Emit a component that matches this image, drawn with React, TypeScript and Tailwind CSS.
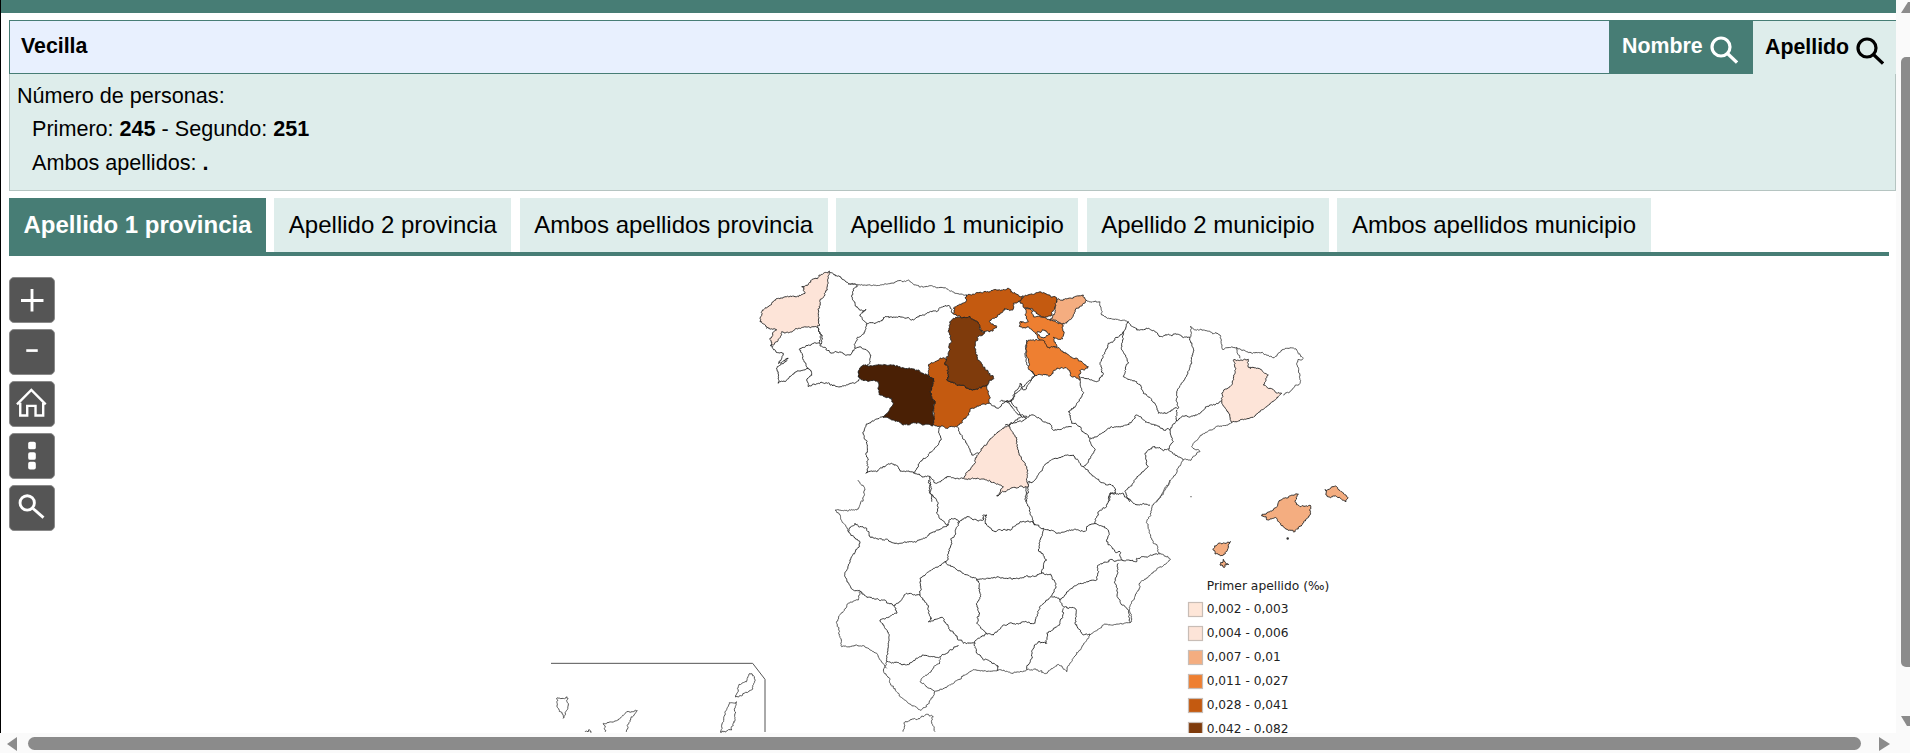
import React from 'react';

// zoom crops the outlines were traced from: [origin x, origin y], 3x
const frames: Record<string, [number, number]> = {
  a: [740, 260],
  b: [1000, 260],
  c: [820, 480],
  d: [520, 640],
  e: [1160, 480],
};

const light = '#fde4d8';
const peach = '#f4ad80';
const orange = '#ee7f31';
const rust = '#c45a10';
const brown = '#7f3b0c';
const dark = '#4a2005';

type Shape = { f: string; p: number[]; fill?: string; coast?: boolean; smooth?: boolean };

const lines: Shape[] = [
  // galicia, asturias
  { f: 'a', p: [270,38,300,50,325,72,352,78,335,105,345,130,365,150,378,148,360,165,380,190,375,215,350,235,345,265,330,285,300,275,270,278,240,255,245,225,232,200] },
  { f: 'a', p: [325,72,400,75,450,70,505,60,525,75,580,80,640,95,680,105], coast: true },
  { f: 'a', p: [380,190,420,185,440,170,480,170,515,180,550,165,590,155,625,135,640,160] },
  { f: 'a', p: [232,200,245,225,240,250,205,255,180,265,190,300,205,325,170,335,115,370,112,320,145,295,115,310,130,280,105,270,92,258] },
  { f: 'a', p: [345,265,360,260,385,275,390,310,355,335,360,355,335,370,300,380,270,375,235,370,205,380,200,360,215,340,205,325] },
  // salamanca, avila, segovia
  { f: 'a', p: [428,470,395,485,368,518,380,550,385,600,378,640,410,635,455,610,480,630,525,640,570,650,590,670,620,650,670,655] },
  { f: 'a', p: [600,500,603,540,575,575,550,595,530,625,525,640] },
  { f: 'a', p: [652,500,680,550,695,585,715,580] },
  { f: 'a', p: [748,430,775,445,800,425,830,460,860,475,810,490,805,500] },
  { f: 'a', p: [860,240,860,310,885,345,850,380,810,425,800,425] },
  { f: 'a', p: [570,650,570,700,575,725] },
  // navarra, aragon, catalunya
  { f: 'b', p: [258,120,300,125,305,165,385,185], coast: true },
  { f: 'b', p: [385,185,370,215,360,225,325,250,300,310,310,340,290,365,240,350] },
  { f: 'b', p: [385,185,410,210,445,205,480,230,520,222,570,232,580,265,575,310,555,355,530,400,535,445,500,460,475,460,465,430,430,400,410,365,370,350,385,310,365,270,370,215] },
  { f: 'b', p: [570,232,570,200,610,210,660,225,670,270,710,262,720,295], coast: true },
  { f: 'b', p: [710,262,740,275,790,280,825,290,860,265,890,270,910,295,890,310,900,370,850,405], coast: true },
  { f: 'b', p: [665,422,620,440,590,465,545,470,530,480,530,450] },
  { f: 'b', p: [695,488,630,510,600,530,575,560,600,575,565,600,550,600,490,700,470,725], coast: true },
  { f: 'b', p: [530,480,510,510,520,545,505,570,550,600] },
  { f: 'b', p: [240,360,250,400,230,430,205,455,215,490,240,500,270,535,285,570,250,620,300,665,345,685,345,700,330,700,325,725] },
  { f: 'b', p: [105,345,70,390,60,370,35,420,65,470,100,465,145,490,165,510,215,500] },
  { f: 'b', p: [0,425,35,420] },
  { f: 'b', p: [65,470,35,490,15,495] },
  { f: 'b', p: [270,535,325,505,380,495,410,465,450,490,490,510,510,510] },
  { f: 'b', p: [505,565,490,572,460,560,435,580,445,620,410,655,375,695,390,725] },
  { f: 'b', p: [250,620,220,585,165,595,130,620,100,665,85,665,80,725] },
  // centre and south
  { f: 'c', p: [615,0,620,70,645,135,670,145,720,160,760,150,790,155,825,130,835,95,860,80,870,40,910,40,940,70,990,75] },
  { f: 'c', p: [325,0,330,40,355,70,350,100,385,135,395,115,410,120,415,130,440,110,490,120,490,105,500,105,495,130,525,155,570,150,600,125,640,125,645,135] },
  { f: 'c', p: [115,0,135,30,130,60,110,90,45,90,85,155], coast: true },
  { f: 'c', p: [85,155,105,130,140,145,150,170,205,180,225,190,290,185,330,160,385,135] },
  { f: 'c', p: [415,130,395,175,385,215,375,245,300,295,300,345,320,370,335,415,325,425,370,415,385,440,415,480,430,490,465,490,500,460] },
  { f: 'c', p: [375,245,430,280,470,300,560,295,630,290,665,280,695,285,708,320,690,352,660,385,645,430,610,425,570,430,520,465,500,460,470,430,480,400,470,370,480,340,470,300] },
  { f: 'c', p: [670,145,655,210,680,240,665,280] },
  { f: 'c', p: [85,155,120,190,95,230,75,290,100,330,120,335,140,350,190,360,225,375,260,340,300,345] },
  { f: 'c', p: [825,130,865,150,860,185,885,215,900,215,905,240,950,245,950,235,1020,220] },
  { f: 'c', p: [1050,0,1000,75,980,125,1000,190,1020,220,1050,240,1020,260,960,310,950,340,930,380,930,428], coast: true },
  { f: 'c', p: [905,240,870,240,835,255,830,300,760,320,720,360,695,352] },
  { f: 'c', p: [895,250,885,310,895,355,925,390,930,428] },
  { f: 'c', p: [930,428,850,435,810,465,780,510,740,575,710,555,680,580,650,570,620,570,575,580,535,570,450,575,400,610,345,635], coast: true },
  { f: 'c', p: [810,465,785,460,765,430,765,385,730,380,720,360] },
  { f: 'c', p: [730,385,720,430,680,460,680,490,655,485,635,515,620,568] },
  { f: 'c', p: [465,490,470,520,535,560,535,570] },
  { f: 'c', p: [225,375,230,400,180,420,205,460,200,545,260,555,310,525,360,530,415,495] },
  { f: 'c', p: [120,335,115,360,85,370,50,430,65,500,110,495,170,520,200,565], coast: true },
  { f: 'c', p: [200,545,190,570,210,610,240,650,295,688,320,680,345,635,300,605,335,570,360,550,360,530], coast: true },
  { f: 'c', p: [250,755,255,725,300,715,325,703,340,710,335,730,345,755], coast: true },
  // canarias
  { f: 'd', p: [110,175,140,170,145,195,130,235,115,205,110,175], coast: true },
  { f: 'd', p: [255,276,250,250,295,240,320,215,352,212,330,240,320,276], coast: true },
  { f: 'd', p: [195,276,205,270,215,276], coast: true },
  { f: 'd', p: [690,100,703,115,695,150,665,168,645,170,655,140,680,125,690,100], coast: true },
  { f: 'd', p: [628,188,650,185,645,240,635,270,600,276,615,225,628,188], coast: true },
  { f: 'd', p: [93,70,698,70,735,118,735,276], coast: true, smooth: true },
];

const fills: Shape[] = [
  { f: 'a', fill: light, p: [270,35,262,90,240,120,235,160,240,195,205,200,160,212,125,215,100,255,92,258,90,235,110,210,80,205,60,185,70,150,100,125,120,115,165,110,195,100,185,80,225,55,240,45] },
  { f: 'a', fill: rust, p: [678,105,770,90,805,85,820,100,850,108,842,122,820,130,815,150,790,150,760,175,748,185,770,200,760,212,735,215,722,210,715,190,690,170,660,170,638,160,640,145,678,125] },
  { f: 'a', fill: rust, p: [565,315,600,295,625,300,615,310,625,325,620,360,655,375,685,385,715,385,740,375,748,430,690,450,680,470,650,500,620,505,578,495,585,430,570,395,580,355,565,345] },
  { f: 'a', fill: brown, p: [660,170,690,170,715,190,722,212,735,215,712,232,705,265,715,300,735,325,750,345,760,352,740,375,715,385,685,385,655,375,620,360,625,325,615,310,625,285,635,245,625,215,640,175] },
  { f: 'a', fill: dark, p: [355,335,370,315,420,315,480,320,535,330,565,345,580,355,570,395,585,430,578,498,540,490,490,495,455,480,428,470,460,430,455,415,420,405,415,365,360,355] },
  { f: 'a', fill: light, p: [805,497,825,530,835,570,860,620,865,680,825,682,790,695,770,708,790,680,740,660,670,655,690,630,705,610,715,580,770,520] },
  { f: 'b', fill: orange, p: [75,145,95,150,100,170,145,178,190,190,192,215,180,238,160,232,170,262,145,265,125,245,110,225,85,200,60,200,60,185,85,185,75,165] },
  { f: 'b', fill: '#ffffff', p: [112,215,135,210,150,222,135,232,118,225] },
  { f: 'b', fill: orange, p: [85,240,120,240,135,245,145,262,170,262,200,280,230,295,265,320,240,330,240,360,215,350,205,330,175,325,150,348,125,345,105,345,85,325,80,290] },
  { f: 'b', fill: rust, p: [70,110,120,95,165,110,170,130,155,165,125,170,95,145,75,145,60,125] },
  { f: 'b', fill: peach, p: [170,120,215,115,250,105,258,122,225,150,215,175,190,190,150,178,165,155] },
  { f: 'b', fill: light, p: [700,300,745,298,745,322,770,325,805,345,790,375,845,400,760,472,695,488,680,450,665,422,665,400,690,380,705,340] },
  { f: 'e', fill: peach, p: [305,105,340,90,370,55,415,42,405,65,420,80,450,75,450,105,425,135,400,155,370,140,350,115,325,120] },
  { f: 'e', fill: peach, p: [495,30,530,20,560,50,558,65,530,50,500,45] },
  { f: 'e', fill: peach, p: [158,208,175,190,212,185,205,205,180,225,165,222] },
  { f: 'e', fill: peach, p: [180,255,190,238,205,255,195,260] },
];

const legend = [
  { label: '0,002 - 0,003', color: '#fee6d8' },
  { label: '0,004 - 0,006', color: '#fde4d8' },
  { label: '0,007 - 0,01', color: peach },
  { label: '0,011 - 0,027', color: orange },
  { label: '0,028 - 0,041', color: rust },
  { label: '0,042 - 0,082', color: brown },
];

const tabs = [
  'Apellido 1 provincia',
  'Apellido 2 provincia',
  'Ambos apellidos provincia',
  'Apellido 1 municipio',
  'Apellido 2 municipio',
  'Ambos apellidos municipio',
];

function noise(x: number, y: number) {
  const v = Math.sin(x * 12.9898 + y * 78.233) * 43758.5453;
  return v - Math.floor(v) - 0.5;
}

// borders look hand drawn at this scale, so break each segment up a bit
function wobble(a: number[], b: number[], out: number[][], amount: number) {
  const d = Math.hypot(b[0] - a[0], b[1] - a[1]);
  if (d < 1.6) {
    out.push(b);
    return;
  }
  const mx = (a[0] + b[0]) / 2;
  const my = (a[1] + b[1]) / 2;
  const m = [mx + noise(mx, my) * amount, my + noise(my, mx) * amount];
  wobble(a, m, out, amount * 0.8);
  wobble(m, b, out, amount * 0.8);
}

function toPath(s: Shape, close: boolean) {
  const [ox, oy] = frames[s.f];
  const pts: number[][] = [];
  for (let i = 0; i < s.p.length; i += 2) pts.push([ox + s.p[i] / 3, oy + s.p[i + 1] / 3]);
  if (s.smooth) return 'M' + pts.map((p) => p.join(' ')).join('L');
  if (close) pts.push(pts[0]);
  const out: number[][] = [pts[0]];
  for (let i = 1; i < pts.length; i++) wobble(pts[i - 1], pts[i], out, 2.6);
  return 'M' + out.map((p) => p[0].toFixed(1) + ' ' + p[1].toFixed(1)).join('L') + (close ? 'Z' : '');
}

function SearchIcon({ color }: { color: string }) {
  return (
    <svg viewBox="0 0 28 28" className="w-[28px] h-[28px] shrink-0 translate-y-[3px]" fill="none" stroke={color} strokeWidth="3.2">
      <circle cx="11" cy="11" r="9" />
      <path d="M17.5 17.5 L27 26.5" />
    </svg>
  );
}

function MapButton({ children }: { children: React.ReactNode }) {
  return (
    <div className="w-[46px] h-[46px] rounded-[5px] bg-[#555555] border border-[#8a8a8a]">
      <svg viewBox="0 0 46 46" className="w-full h-full" fill="none" stroke="#ffffff">
        {children}
      </svg>
    </div>
  );
}

function SpainMap() {
  return (
    <svg viewBox="1 256 1895 477" className="block w-[1895px] h-[477px]">
      {lines.map((s, i) => (
        <path key={i} d={toPath(s, false)} fill="none" stroke={s.coast ? '#555555' : '#222222'} strokeWidth={s.coast ? 1 : 0.9} />
      ))}
      {fills.map((s, i) => (
        <path key={i} d={toPath(s, true)} fill={s.fill} stroke="#222222" strokeWidth="0.9" />
      ))}
      <circle cx="1287.7" cy="538.5" r="1.2" fill="#333333" />
      <circle cx="1191" cy="496.7" r="0.6" fill="#333333" />
      <g className="font-['DejaVu_Sans',sans-serif]" fontSize="12.2" fill="#222222">
        <text x="1206.7" y="590" fontSize="12.3">Primer apellido (‰)</text>
        {legend.map((l, i) => (
          <g key={l.label}>
            <rect x="1188.5" y={602.5 + i * 24} width="14" height="14" fill={l.color} stroke="#c8bdb6" strokeWidth="1.2" />
            <text x="1206.7" y={613 + i * 24}>{l.label}</text>
          </g>
        ))}
      </g>
    </svg>
  );
}

export default function App() {
  return (
    <div className="w-[1910px] h-[753px] overflow-hidden bg-[#fafafa] text-black font-['Liberation_Sans',Arial,sans-serif]">
      <div className="flex h-[733px]">
        <div className="w-[1896px] h-full border-l border-black bg-white flex flex-col">
          <div className="h-[13px] bg-[#477d75] shrink-0" />

          <div className="pl-[8px] pt-[7px]">
            <div className="flex h-[54px] border-y border-l border-[#477d75] bg-[#e8f0fe]">
              <div className="flex-1 pl-[11px] flex items-center font-bold text-[21.33px]">Vecilla</div>
              <div className="w-[144px] bg-[#477d75] text-white flex items-center pl-[13px] gap-[7px] font-bold text-[21.33px] -my-px">
                Nombre <SearchIcon color="#ffffff" />
              </div>
              <div className="w-[143px] bg-[#deedeb] flex items-center pl-[12px] gap-[7px] font-bold text-[21.33px] -mb-px">
                Apellido <SearchIcon color="#000000" />
              </div>
            </div>
            <div className="h-[117px] bg-[#deedeb] border-x border-b border-[#b5c4c1] pl-[7px] pt-[4.5px] text-[21.6px] leading-[33.5px]">
              <div>Número de personas:</div>
              <div className="pl-[15px]">Primero: <b>245</b> - Segundo: <b>251</b></div>
              <div className="pl-[15px]">Ambos apellidos: <b>.</b></div>
            </div>
          </div>

          <div className="ml-[8px] mr-[7px] mt-[7px] flex gap-[8.3px] border-b-4 border-[#477d75] h-[58px] shrink-0">
            {tabs.map((t, i) => (
              <div
                key={t}
                className={
                  i === 0
                    ? 'h-[54px] px-[14.5px] flex items-center bg-[#477d75] text-white font-bold text-[24px]'
                    : 'h-[54px] px-[14.5px] flex items-center bg-[#deedeb] text-[24px]'
                }
              >
                {t}
              </div>
            ))}
          </div>

          <div className="relative flex-1 overflow-hidden">
            <SpainMap />
            <div className="absolute left-[8px] top-[21px] flex flex-col gap-[6px]">
              <MapButton>
                <path d="M11.5 23.5 H35 M23 11.5 V35" strokeWidth="3" />
              </MapButton>
              <MapButton>
                <path d="M17 21.5 H29" strokeWidth="2.8" />
              </MapButton>
              <MapButton>
                <path d="M7.3 23.3 L22.3 8.3 L37.3 23.3" strokeWidth="2.5" />
                <path d="M10.7 21.7 V35 H18 V25 H26.7 V35 H34.7 V21.7" strokeWidth="2.5" />
              </MapButton>
              <MapButton>
                <rect x="19" y="8" width="8" height="8" rx="2" fill="#ffffff" stroke="none" />
                <rect x="19" y="19" width="8" height="8" rx="2" fill="#ffffff" stroke="none" />
                <rect x="19" y="29" width="8" height="8" rx="2" fill="#ffffff" stroke="none" />
              </MapButton>
              <MapButton>
                <circle cx="18" cy="17.7" r="7.5" strokeWidth="3" />
                <path d="M24 23.5 L35 33" strokeWidth="3" />
              </MapButton>
            </div>
          </div>
        </div>

        {/* vertical scrollbar */}
        <div className="w-[14px] flex flex-col pl-[5px]">
          <svg viewBox="0 0 10 11" className="w-[10px] h-[11px] mt-[2px] shrink-0">
            <path d="M0 11 L7 0 L10 0 L10 11 Z" fill="#8b8b8b" />
          </svg>
          <div className="w-[9px] h-[610px] mt-[44px] rounded-l-[5px] bg-[#8b8b8b]" />
          <svg viewBox="0 0 10 10" className="w-[10px] h-[10px] mt-[49px] shrink-0">
            <path d="M0 0 H10 V10 H6 Z" fill="#8b8b8b" />
          </svg>
        </div>
      </div>

      {/* horizontal scrollbar */}
      <div className="h-[20px] flex items-start pt-[4px] pl-[7px]">
        <svg viewBox="0 0 10 14" className="w-[10px] h-[14px] shrink-0">
          <path d="M10 0 V14 L0 7 Z" fill="#8b8b8b" />
        </svg>
        <div className="ml-[11px] w-[1833px] h-[13px] rounded-full bg-[#8b8b8b]" />
        <svg viewBox="0 0 11 14" className="ml-[18px] w-[11px] h-[14px] shrink-0">
          <path d="M0 0 V14 L11 7 Z" fill="#8b8b8b" />
        </svg>
      </div>
    </div>
  );
}
